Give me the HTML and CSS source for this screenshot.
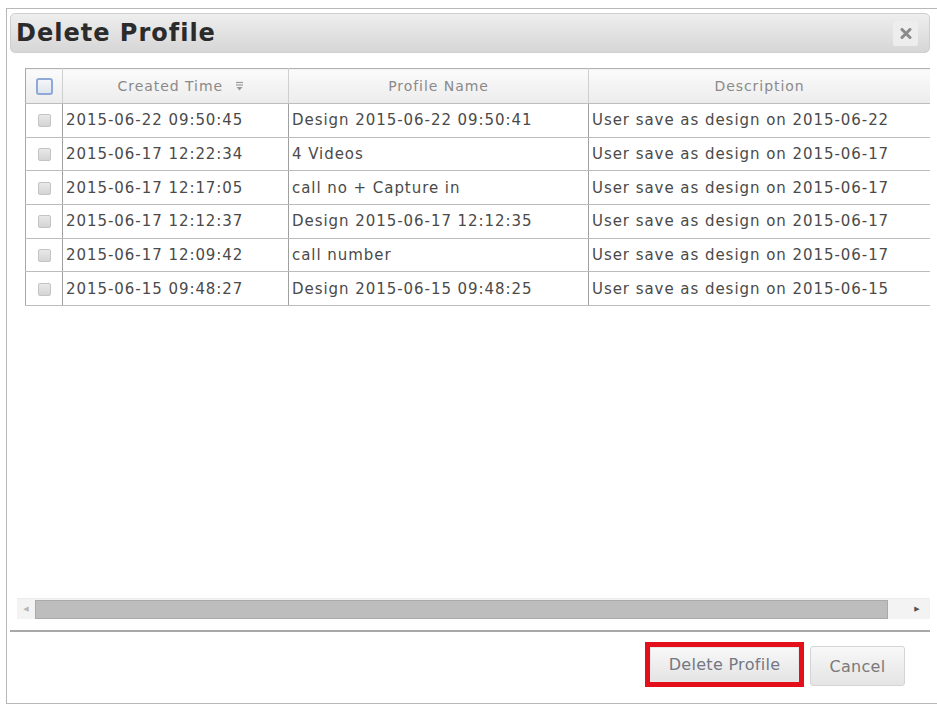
FILE: index.html
```html
<!DOCTYPE html>
<html lang="en">
<head>
    <meta charset="UTF-8">
    <meta name="viewport" content="width=device-width, initial-scale=1.0">
    <title>Delete Profile</title>
    <link rel="stylesheet" href="styles.css">
</head>
<body>

    <div class="dialog">
        <div class="titlebar">
            <h1>Delete Profile</h1>
            <span class="close-btn">
                <svg width="12" height="11" viewBox="0 0 12 11">
                    <path d="M2 1.5 L10 9.5 M10 1.5 L2 9.5" stroke="#8a8a8a" stroke-width="3" stroke-linecap="round"/>
                </svg>
            </span>
        </div>

        <div class="grid-area">
            <table class="grid">
                <thead>
                    <tr>
                        <th class="col-check"><span class="check-all"></span></th>
                        <th class="col-time">Created Time
                            <svg class="sort-icon" width="9" height="10" viewBox="0 0 9 10">
                                <line x1="1" y1="1.5" x2="8" y2="1.5" stroke="#9a9a9a" stroke-width="1.2"/>
                                <line x1="1" y1="4" x2="8" y2="4" stroke="#9a9a9a" stroke-width="1.2"/>
                                <path d="M1.5 6 L7.5 6 L4.5 9.5 Z" fill="#9a9a9a"/>
                            </svg>
                        </th>
                        <th class="col-name">Profile Name</th>
                        <th class="col-desc">Description</th>
                    </tr>
                </thead>
                <tbody>
                    <tr>
                        <td class="col-check"><span class="check"></span></td>
                        <td>2015-06-22 09:50:45</td>
                        <td>Design 2015-06-22 09:50:41</td>
                        <td>User save as design on 2015-06-22</td>
                    </tr>
                    <tr>
                        <td class="col-check"><span class="check"></span></td>
                        <td>2015-06-17 12:22:34</td>
                        <td>4 Videos</td>
                        <td>User save as design on 2015-06-17</td>
                    </tr>
                    <tr>
                        <td class="col-check"><span class="check"></span></td>
                        <td>2015-06-17 12:17:05</td>
                        <td>call no + Capture in</td>
                        <td>User save as design on 2015-06-17</td>
                    </tr>
                    <tr>
                        <td class="col-check"><span class="check"></span></td>
                        <td>2015-06-17 12:12:37</td>
                        <td>Design 2015-06-17 12:12:35</td>
                        <td>User save as design on 2015-06-17</td>
                    </tr>
                    <tr>
                        <td class="col-check"><span class="check"></span></td>
                        <td>2015-06-17 12:09:42</td>
                        <td>call number</td>
                        <td>User save as design on 2015-06-17</td>
                    </tr>
                    <tr>
                        <td class="col-check"><span class="check"></span></td>
                        <td>2015-06-15 09:48:27</td>
                        <td>Design 2015-06-15 09:48:25</td>
                        <td>User save as design on 2015-06-15</td>
                    </tr>
                </tbody>
            </table>

            <div class="hscroll">
                <span class="arrow arrow-left">&#9664;</span>
                <span class="thumb"></span>
                <span class="arrow arrow-right">&#9654;</span>
            </div>
        </div>

        <div class="footer">
            <span class="highlight"><button class="btn">Delete Profile</button></span>
            <button class="btn btn-cancel">Cancel</button>
        </div>
    </div>

</body>
</html>
```

FILE: styles.css
```css
* {
    box-sizing: border-box;
}
body {
    font-family: "DejaVu Sans", Verdana, sans-serif;
    background-color: #fff;
    margin: 0;
    overflow: hidden;
}
.dialog {
    margin: 8px 0 0 6px;
    width: 940px;
    height: 696px;
    border: 1px solid #b8b8b8;
    border-right: none;
    padding: 4px 0 0 3px;
    display: flex;
    flex-direction: column;
}
.titlebar {
    width: 920px;
    height: 40px;
    display: flex;
    align-items: center;
    justify-content: space-between;
    padding: 0 11px 0 5px;
    border: 1px solid #cfcfcf;
    border-radius: 5px;
    background: linear-gradient(#eeeeee, #d6d6d6);
}
.titlebar h1 {
    margin: 0;
    font-size: 24px;
    font-weight: bold;
    letter-spacing: 1px;
    color: #2b2b2b;
}
.close-btn {
    width: 25px;
    height: 25px;
    display: flex;
    align-items: center;
    justify-content: center;
    background-color: #ededed;
    border-radius: 2px;
}
.grid-area {
    height: 577px;
    padding-top: 15px;
    display: flex;
    flex-direction: column;
}
.grid {
    width: 905px;
    margin-left: 15px;
    border-collapse: collapse;
    table-layout: fixed;
    border-top: 1px solid #b0b0b0;
    border-left: 1px solid #a8a8a8;
    font-size: 15px;
    letter-spacing: 0.95px;
    color: #4a4a4a;
}
.grid th {
    height: 35px;
    font-size: 14px;
    font-weight: normal;
    color: #8a8a8a;
    background: linear-gradient(#fbfbfb, #ececec);
    border-right: 1px solid #cfcfcf;
    border-bottom: 1px solid #bdbdbd;
    white-space: nowrap;
}
.grid th.col-time {
    padding-left: 12px;
}
.grid th.col-desc {
    border-right: none;
}
.grid td {
    height: 33.7px;
    padding: 0 3px;
    border-right: 1px solid #a0a0a0;
    border-bottom: 1px solid #bcbcbc;
    white-space: nowrap;
    overflow: hidden;
}
.grid td:last-child {
    border-right: none;
}
.col-check {
    width: 37px;
    text-align: center;
}
.grid td.col-check {
    padding: 0;
}
.col-time {
    width: 226px;
}
.col-name {
    width: 300px;
}
.sort-icon {
    margin-left: 7px;
    vertical-align: 0;
}
.check-all {
    display: inline-block;
    width: 17px;
    height: 17px;
    vertical-align: middle;
    border: 2px solid #8fa9d6;
    border-radius: 3px;
    background: linear-gradient(#f4f6fa, #dfe5ee);
}
.check {
    display: inline-block;
    width: 13px;
    height: 13px;
    vertical-align: middle;
    border: 1px solid #c4c4c4;
    border-radius: 2px;
    background: linear-gradient(#e8e8e8, #d4d4d4);
}
.hscroll {
    margin-top: auto;
    margin-bottom: 11px;
    margin-left: 7px;
    width: 913px;
    height: 21px;
    display: flex;
    align-items: center;
    background-color: #f3f3f3;
    border-top: 1px solid #ececec;
}
.arrow {
    font-size: 7px;
    width: 18px;
    text-align: center;
}
.arrow-left {
    color: #b5b5b5;
}
.arrow-right {
    margin-left: auto;
    width: 26px;
    color: #555;
}
.thumb {
    width: 853px;
    height: 19px;
    background-color: #bdbdbd;
    border: 1px solid #aaa;
}
.footer {
    width: 920px;
    flex: 1;
    border-top: 2px solid #a8a8a8;
    display: flex;
    justify-content: flex-end;
    align-items: flex-start;
    gap: 6px;
    padding: 10px 25px 0 0;
}
.highlight {
    display: block;
    border: 5px solid #e3101c;
    padding: 0;
}
.btn {
    font-family: "DejaVu Sans", Verdana, sans-serif;
    font-size: 16px;
    letter-spacing: 0.3px;
    color: #737884;
    background: linear-gradient(#f8f8f8, #e4e4e4);
    border: 1px solid #d4d4d4;
    border-radius: 3px;
    height: 35px;
    padding: 0 16px;
    cursor: pointer;
}
.highlight .btn {
    display: block;
    border-color: #e8e8e8;
    border-radius: 0;
    width: 149px;
}
.btn-cancel {
    margin-top: 4px;
    height: 40px;
    width: 95px;
    padding: 0;
    color: #7a7a7a;
}
```
